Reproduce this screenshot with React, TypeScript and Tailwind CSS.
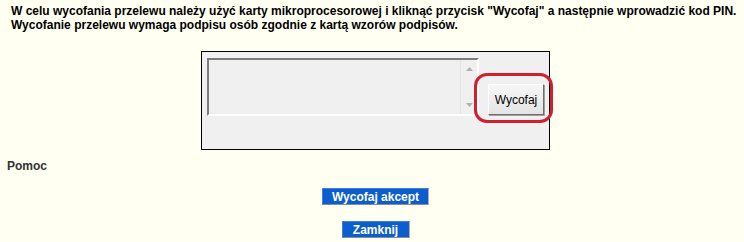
import React from 'react';

const font = { fontFamily: '"Liberation Sans", Arial, sans-serif' };

const BlueButton: React.FC<{ label: string; width: string }> = ({ label, width }) => (
    <button
        className={`${width} h-[17px] bg-[#0c5dcd] text-white font-bold text-[12px] leading-[14px] border border-t-[#3d7fdc] border-l-[#3d7fdc] border-b-[#8c8c8c] border-r-[#b0b0b0] flex items-center justify-center`}
    >
        {label}
    </button>
);

export default function App() {
    return (
        <div className="w-[744px] h-[242px] bg-[#fffff2] text-black overflow-hidden" style={font}>
            {/* Instruction */}
            <div className="pt-[4px] pl-[11px] text-[12px] leading-[14px] font-bold whitespace-nowrap">
                W celu wycofania przelewu należy użyć karty mikroprocesorowej i kliknąć przycisk "Wycofaj" a następnie wprowadzić kod PIN.
                <br />
                Wycofanie przelewu wymaga podpisu osób zgodnie z kartą wzorów podpisów.
            </div>

            {/* Signing panel */}
            <div className="pl-[7px] mt-[19px] flex justify-center">
                <div className="w-[349px] h-[99px] border border-black bg-[#f0f0f0] pl-[5px] pt-[6px]">
                    <div className="flex items-end gap-[9px]">
                        <div className="w-[272px] h-[58px] border-2 border-t-[#7c7c7c] border-l-[#7c7c7c] border-b-white border-r-white bg-[#f0f0f0] flex justify-end">
                            <div className="w-[17px] h-full border-l border-[#e2e2e2] flex flex-col items-center justify-between py-[7px]">
                                <svg width="7" height="4" viewBox="0 0 7 4"><path d="M0 4 L3.5 0 L7 4 Z" fill="#b0b0b0" /></svg>
                                <svg width="7" height="4" viewBox="0 0 7 4"><path d="M0 0 L3.5 4 L7 0 Z" fill="#b0b0b0" /></svg>
                            </div>
                        </div>
                        <div className="relative mb-[1px]">
                            <button className="w-[56px] h-[31px] bg-gradient-to-b from-[#f6f6f6] to-[#e4e4e4] border border-t-white border-l-white border-b-[#6e6e6e] border-r-[#6e6e6e] shadow-[1px_1px_0_#a0a0a0] text-[12px] text-black">
                                Wycofaj
                            </button>
                            <div className="absolute -left-[14px] -top-[11px] w-[79px] h-[50px] border-[3px] border-[#d01f2d] rounded-[13px] pointer-events-none" />
                        </div>
                    </div>
                </div>
            </div>

            {/* Help */}
            <div className="mt-[10px] pl-[7px] text-[12px] leading-[13px] font-bold text-[#333333]">Pomoc</div>

            {/* Actions */}
            <div className="pl-[7px] mt-[15px] flex flex-col items-center gap-[16px]">
                <BlueButton label="Wycofaj akcept" width="w-[107px]" />
                <BlueButton label="Zamknij" width="w-[68px]" />
            </div>
        </div>
    );
}
